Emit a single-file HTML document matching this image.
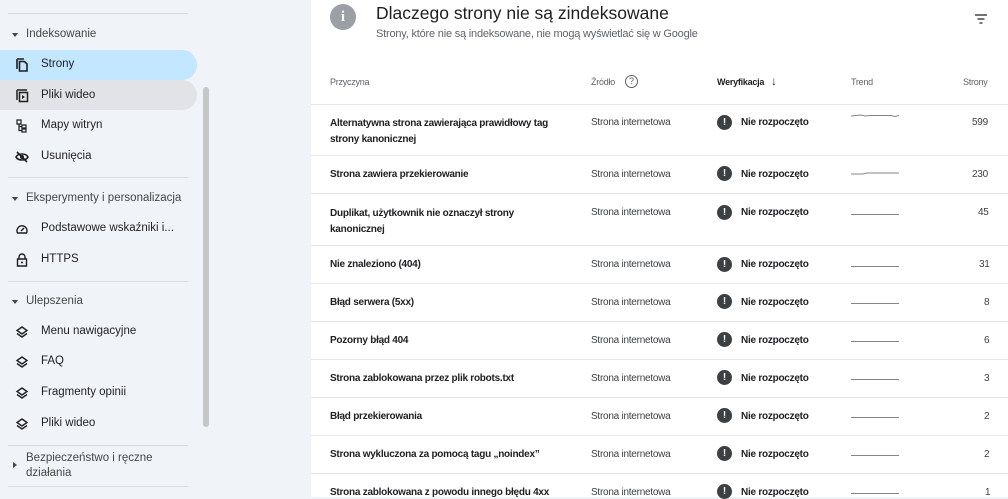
<!DOCTYPE html>
<html><head><meta charset="utf-8"><style>
*{margin:0;padding:0;box-sizing:border-box}
body{width:1008px;height:497px;overflow:hidden;background:#f0f3f8;font-family:"Liberation Sans",Arial,sans-serif;position:relative;color:#1f1f1f}
.a{position:absolute;white-space:nowrap}
.div{position:absolute;left:8px;width:180px;height:1px;background:#dadce0}
.sec{position:absolute;left:26px;font-size:11.5px;color:#444746}
.tri{position:absolute;left:12px;width:0;height:0;border-left:3px solid transparent;border-right:3px solid transparent;border-top:4px solid #444746}
.tri.r{border-top:3px solid transparent;border-bottom:3px solid transparent;border-left:4px solid #444746;border-right:0}
.it{position:absolute;left:41px;font-size:11.5px;color:#1f1f1f}
.ic{position:absolute;left:15px;width:14px;height:14px}
.card{position:absolute;left:311px;top:0;width:697px;height:497px;background:#fff}
.row{position:absolute;left:311px;width:697px;border-top:1px solid #e6e6e6}
.t{position:absolute;font-size:10px;letter-spacing:-0.25px;color:#3c4043;white-space:nowrap;margin-top:2px}
.b{font-weight:bold;color:#202124}
.h{font-size:9px;color:#5f6368}
.ex{position:absolute;left:717px;width:15px;height:15px;border-radius:50%;background:#3c4043;color:#fff;font-size:10px;font-weight:bold;text-align:center;line-height:15px;margin-top:1px}
.tr{position:absolute;left:851px;width:48px;height:1px;background:#80868b}
</style></head><body>
<div class="div" style="top:13px"></div>
<div class="tri" style="top:33px"></div><div class="sec" style="top:28px">Indeksowanie</div>
<div class="a" style="left:0;top:50px;width:197px;height:30px;background:#c2e7ff;border-radius:0 15px 15px 0"></div>
<div class="a" style="left:0;top:80px;width:197px;height:30px;background:#e1e3e6;border-radius:0 15px 15px 0"></div>
<svg class="ic" style="top:58px" viewBox="0 0 14 14"><path d="M2 1v10M2 1h7M4.5 3.5h5l2.5 2.5v7h-7.5z" fill="none" stroke="#1f1f1f" stroke-width="1.6"/></svg>
<div class="it" style="top:58px">Strony</div>
<svg class="ic" style="top:89px" viewBox="0 0 14 14"><path d="M2 1v10M2 1h10M4.5 3.5h8v9h-8z" fill="none" stroke="#1f1f1f" stroke-width="1.5"/><path d="M7 6l3 2-3 2z" fill="#1f1f1f"/></svg>
<div class="it" style="top:89px">Pliki wideo</div>
<svg class="ic" style="top:119px" viewBox="0 0 14 14"><path d="M2 1h4v4h-4zM7 6h4v3h-4zM7 10h4v3h-4zM4 5v6.5h3M4 7.5h3" fill="none" stroke="#1f1f1f" stroke-width="1.2"/></svg>
<div class="it" style="top:119px">Mapy witryn</div>
<svg class="ic" style="top:150px" viewBox="0 0 14 14"><path d="M1 7c2-4 10-4 12 0c-2 4-10 4-12 0z" fill="none" stroke="#1f1f1f" stroke-width="1.6"/><circle cx="7" cy="7" r="2" fill="#1f1f1f"/><path d="M2 2l10 10" stroke="#1f1f1f" stroke-width="1.6"/></svg>
<div class="it" style="top:150px">Usunięcia</div>
<div class="div" style="top:177px"></div>
<div class="tri" style="top:197px"></div><div class="sec" style="top:192px">Eksperymenty i personalizacja</div>
<svg class="ic" style="top:222px" viewBox="0 0 14 14"><path d="M2.5 11a5 5 0 1 1 9 0z" fill="none" stroke="#1f1f1f" stroke-width="1.4"/><path d="M6 9l3-3" stroke="#1f1f1f" stroke-width="1.4"/></svg>
<div class="it" style="top:222px">Podstawowe wskaźniki i...</div>
<svg class="ic" style="top:253px" viewBox="0 0 14 14"><path d="M4 6V4a3 3 0 0 1 6 0v2M2.5 6h9v7h-9z" fill="none" stroke="#1f1f1f" stroke-width="1.4"/><circle cx="7" cy="9.5" r="1" fill="#1f1f1f"/></svg>
<div class="it" style="top:253px">HTTPS</div>
<div class="div" style="top:281px"></div>
<div class="tri" style="top:300px"></div><div class="sec" style="top:295px">Ulepszenia</div>
<svg class="ic" style="top:325px" viewBox="0 0 14 14"><path d="M7 2l5 3.5-5 3.5-5-3.5zM2 8.5l5 3.5 5-3.5" fill="none" stroke="#1f1f1f" stroke-width="1.4"/></svg>
<div class="it" style="top:325px">Menu nawigacyjne</div>
<svg class="ic" style="top:355px" viewBox="0 0 14 14"><path d="M7 2l5 3.5-5 3.5-5-3.5zM2 8.5l5 3.5 5-3.5" fill="none" stroke="#1f1f1f" stroke-width="1.4"/></svg>
<div class="it" style="top:355px">FAQ</div>
<svg class="ic" style="top:386px" viewBox="0 0 14 14"><path d="M7 2l5 3.5-5 3.5-5-3.5zM2 8.5l5 3.5 5-3.5" fill="none" stroke="#1f1f1f" stroke-width="1.4"/></svg>
<div class="it" style="top:386px">Fragmenty opinii</div>
<svg class="ic" style="top:417px" viewBox="0 0 14 14"><path d="M7 2l5 3.5-5 3.5-5-3.5zM2 8.5l5 3.5 5-3.5" fill="none" stroke="#1f1f1f" stroke-width="1.4"/></svg>
<div class="it" style="top:417px">Pliki wideo</div>
<div class="div" style="top:445px"></div>
<div class="tri r" style="top:462px;left:13px"></div>
<div class="sec" style="top:451px;line-height:15px">Bezpieczeństwo i ręczne<br>działania</div>
<div class="div" style="top:486px"></div>
<div class="a" style="left:203px;top:87px;width:6px;height:340px;background:#c4c7c5;border-radius:3px"></div>

<div class="card"></div>
<div class="a" style="left:330px;top:4px;width:26px;height:26px;border-radius:50%;background:#9aa0a6;color:#fff;font-size:15px;font-weight:bold;text-align:center;line-height:26px;font-family:'Liberation Serif',serif">i</div>
<div class="a" style="left:376px;top:3px;font-size:17.5px;color:#1f1f1f">Dlaczego strony nie są zindeksowane</div>
<div class="a" style="left:376px;top:28px;font-size:11px;color:#5f6368;letter-spacing:-0.2px">Strony, które nie są indeksowane, nie mogą wyświetlać się w Google</div>
<svg class="a" style="left:974px;top:13px" width="14" height="12" viewBox="0 0 14 12"><path d="M1 2h12M3.5 6h7M5.5 10h3" stroke="#444746" stroke-width="1.6"/></svg>

<div class="t h" style="left:330px;top:75px">Przyczyna</div>
<div class="t h" style="left:591px;top:75px">Źródło</div>
<div class="a" style="left:625px;top:75px;width:13px;height:13px;border:1.2px solid #5f6368;border-radius:50%;font-size:9px;text-align:center;line-height:11px;color:#5f6368">?</div>
<div class="t b" style="left:717px;top:75px;font-size:9px">Weryfikacja</div>
<div class="a" style="left:771px;top:74px;font-size:12px;color:#1f1f1f">↓</div>
<div class="t h" style="left:851px;top:75px">Trend</div>
<div class="t h" style="left:963px;top:75px">Strony</div>

<div class="row" style="top:104px"></div>
<div class="t b" style="left:330px;top:114px;line-height:16px">Alternatywna strona zawierająca prawidłowy tag<br>strony kanonicznej</div>
<div class="t" style="left:591px;top:115px">Strona internetowa</div>
<div class="ex" style="top:114px">!</div><div class="t b" style="left:741px;top:115px">Nie rozpoczęto</div>
<svg class="a" style="left:851px;top:112px" width="48" height="6"><path d="M0 4 L10 3 L14 4 L20 3.5 L40 3.5 L44 4.5 L48 3.5" fill="none" stroke="#80868b" stroke-width="1"/></svg>
<div class="t" style="left:972px;top:115px">599</div>

<div class="row" style="top:155px"></div>
<div class="t b" style="left:330px;top:167px">Strona zawiera przekierowanie</div>
<div class="t" style="left:591px;top:167px">Strona internetowa</div>
<div class="ex" style="top:165px">!</div><div class="t b" style="left:741px;top:167px">Nie rozpoczęto</div>
<svg class="a" style="left:851px;top:171px" width="48" height="5"><path d="M0 3 L12 3 L16 2 L48 2" fill="none" stroke="#80868b" stroke-width="1"/></svg>
<div class="t" style="left:972px;top:167px">230</div>

<div class="row" style="top:193px"></div>
<div class="t b" style="left:330px;top:204px;line-height:16px">Duplikat, użytkownik nie oznaczył strony<br>kanonicznej</div>
<div class="t" style="left:591px;top:205px">Strona internetowa</div>
<div class="ex" style="top:204px">!</div><div class="t b" style="left:741px;top:205px">Nie rozpoczęto</div>
<div class="tr" style="top:214px"></div>
<div class="t" style="left:978px;top:205px">45</div>

<div class="row" style="top:245px"></div>
<div class="t b" style="left:330px;top:257px">Nie znaleziono (404)</div>
<div class="t" style="left:591px;top:257px">Strona internetowa</div>
<div class="ex" style="top:256px">!</div><div class="t b" style="left:741px;top:257px">Nie rozpoczęto</div>
<div class="tr" style="top:266px"></div>
<div class="t" style="left:979px;top:257px">31</div>

<div class="row" style="top:283px"></div>
<div class="t b" style="left:330px;top:295px">Błąd serwera (5xx)</div>
<div class="t" style="left:591px;top:295px">Strona internetowa</div>
<div class="ex" style="top:293px">!</div><div class="t b" style="left:741px;top:295px">Nie rozpoczęto</div>
<div class="tr" style="top:303px"></div>
<div class="t" style="left:984px;top:295px">8</div>

<div class="row" style="top:321px"></div>
<div class="t b" style="left:330px;top:333px">Pozorny błąd 404</div>
<div class="t" style="left:591px;top:333px">Strona internetowa</div>
<div class="ex" style="top:331px">!</div><div class="t b" style="left:741px;top:333px">Nie rozpoczęto</div>
<div class="tr" style="top:341px"></div>
<div class="t" style="left:984px;top:333px">6</div>

<div class="row" style="top:359px"></div>
<div class="t b" style="left:330px;top:371px">Strona zablokowana przez plik robots.txt</div>
<div class="t" style="left:591px;top:371px">Strona internetowa</div>
<div class="ex" style="top:369px">!</div><div class="t b" style="left:741px;top:371px">Nie rozpoczęto</div>
<div class="tr" style="top:379px"></div>
<div class="t" style="left:984px;top:371px">3</div>

<div class="row" style="top:397px"></div>
<div class="t b" style="left:330px;top:409px">Błąd przekierowania</div>
<div class="t" style="left:591px;top:409px">Strona internetowa</div>
<div class="ex" style="top:407px">!</div><div class="t b" style="left:741px;top:409px">Nie rozpoczęto</div>
<div class="tr" style="top:417px"></div>
<div class="t" style="left:984px;top:409px">2</div>

<div class="row" style="top:435px"></div>
<div class="t b" style="left:330px;top:447px">Strona wykluczona za pomocą tagu „noindex”</div>
<div class="t" style="left:591px;top:447px">Strona internetowa</div>
<div class="ex" style="top:445px">!</div><div class="t b" style="left:741px;top:447px">Nie rozpoczęto</div>
<div class="tr" style="top:455px"></div>
<div class="t" style="left:984px;top:447px">2</div>

<div class="row" style="top:473px"></div>
<div class="t b" style="left:330px;top:485px">Strona zablokowana z powodu innego błędu 4xx</div>
<div class="t" style="left:591px;top:485px">Strona internetowa</div>
<div class="ex" style="top:483px">!</div><div class="t b" style="left:741px;top:485px">Nie rozpoczęto</div>
<div class="tr" style="top:493px"></div>
<div class="t" style="left:985px;top:485px">1</div>
</body></html>
